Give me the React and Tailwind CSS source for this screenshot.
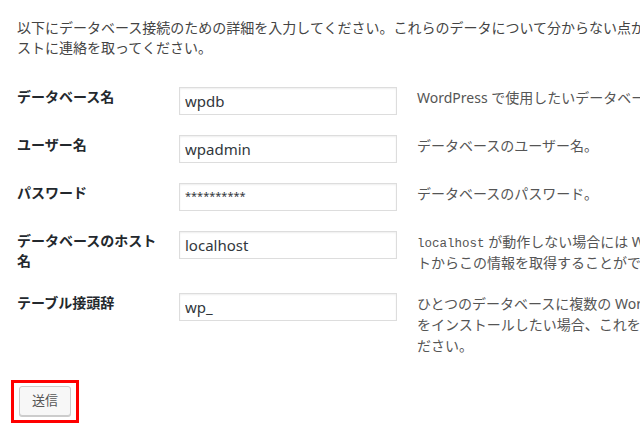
import React from 'react';

const rows = [
  {
    label: 'データベース名',
    value: 'wpdb',
    desc: <>WordPress で使用したいデータベース名。</>,
  },
  {
    label: 'ユーザー名',
    value: 'wpadmin',
    desc: <>データベースのユーザー名。</>,
  },
  {
    label: 'パスワード',
    value: '**********',
    small: true,
    desc: <>データベースのパスワード。</>,
  },
  {
    label: 'データベースのホスト名',
    value: 'localhost',
    desc: (
      <>
        <code className="font-['Liberation_Mono',monospace] text-[12.5px] leading-none">localhost</code> が動作しない場合には Web ホス
        <br />
        トからこの情報を取得することができます。
      </>
    ),
  },
  {
    label: 'テーブル接頭辞',
    value: 'wp_',
    desc: (
      <>
        ひとつのデータベースに複数の WordPress
        <br />
        をインストールしたい場合、これを変えてく
        <br />
        ださい。
      </>
    ),
  },
];

export default function App() {
  return (
    <div className="w-[640px] h-[434px] overflow-hidden bg-white font-['Noto_Sans','Noto_Sans_CJK_JP',sans-serif]">
      <div className="w-[1000px] pl-[17px] pt-[18px]">
        {/* intro */}
        <p className="text-[14px] leading-5 text-[#444] whitespace-nowrap">
          以下にデータベース接続のための詳細を入力してください。これらのデータについて分からない点があれば、ホ
          <br />
          ストに連絡を取ってください。
        </p>

        {/* form rows */}
        <div className="mt-[29px] flex flex-col gap-5">
          {rows.map((r) => (
            <div key={r.label} className="flex items-start">
              <div className="w-[162px] pr-[16px] text-[14px] leading-5 font-bold text-[#23282d]">
                {r.label}
              </div>
              <input
                readOnly
                value={r.value}
                className={
                  'w-[218px] h-[28px] px-[5px] border border-[#ddd] bg-white text-[#32373c] outline-none shadow-[inset_0_1px_2px_rgba(0,0,0,0.07)] font-["Noto_Sans",sans-serif] ' +
                  (r.small ? 'text-[11px] pb-[3px]' : 'text-[15px]')
                }
              />
              <div className="ml-5 h-auto text-[14px] leading-[21px] text-[#555] whitespace-nowrap">
                {r.desc}
              </div>
            </div>
          ))}
        </div>

        {/* submit */}
        <div className="mt-[24px] -ml-[6px] inline-flex border-[3px] border-[#ff0000] px-[5px] pt-[3px] pb-[4px]">
          <button className="w-[52px] h-[30px] rounded-[3px] border border-[#ccc] bg-[#f7f7f7] shadow-[0_1px_0_#ccc] text-[13px] text-[#555]">
            送信
          </button>
        </div>
      </div>
    </div>
  );
}
